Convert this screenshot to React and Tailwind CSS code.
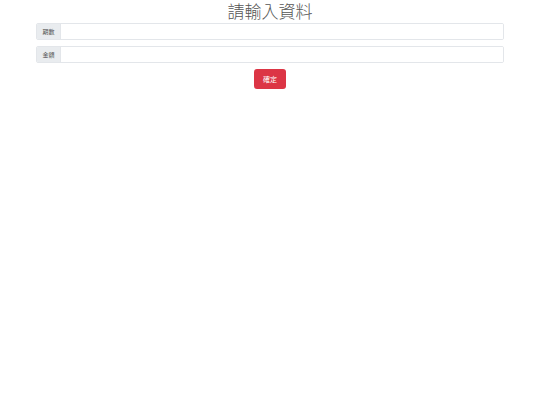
export default function App() {
  const font = { fontFamily: '"Noto Sans CJK TC", "Noto Sans", sans-serif' };
  return (
    <div className="w-[540px] h-[405px] bg-white" style={font}>
      <div className="mx-[36px] w-[468px] flex flex-col">
        <h1 className="text-center text-[17px] leading-[22px] text-[#555] font-light">請輸入資料</h1>
        <div className="mt-[1px] flex h-[17px] border border-[#e3e6ea] rounded-[2px] overflow-hidden">
          <div className="w-[24px] bg-[#e9ecef] border-r border-[#e3e6ea] flex items-center justify-center text-[6px] text-[#555]">期數</div>
          <div className="flex-1 bg-white"></div>
        </div>
        <div className="mt-[6px] flex h-[17px] border border-[#e3e6ea] rounded-[2px] overflow-hidden">
          <div className="w-[24px] bg-[#e9ecef] border-r border-[#e3e6ea] flex items-center justify-center text-[6px] text-[#555]">金額</div>
          <div className="flex-1 bg-white"></div>
        </div>
        <div className="mt-[6px] flex justify-center">
          <button className="w-[32px] h-[20px] bg-[#dc3545] rounded-[3px] text-white text-[7px] flex items-center justify-center">確定</button>
        </div>
      </div>
    </div>
  );
}
